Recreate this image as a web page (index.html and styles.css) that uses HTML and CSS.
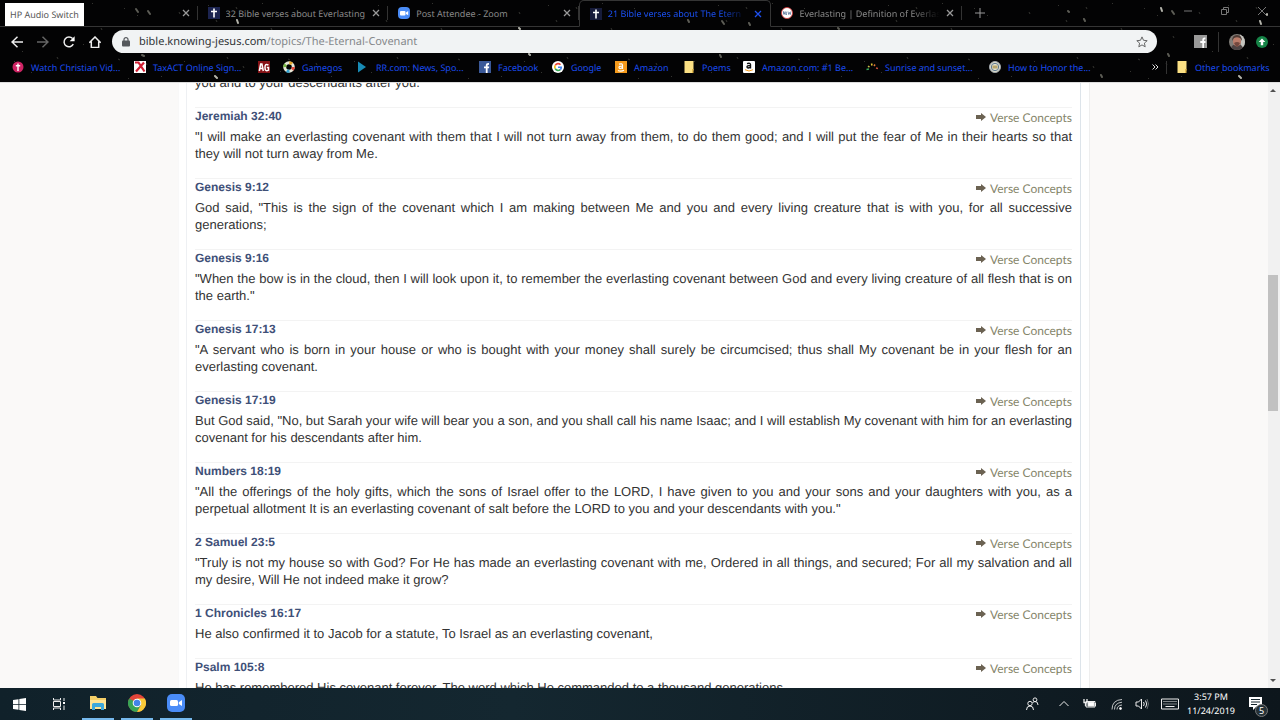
FILE: index.html
```html
<!DOCTYPE html>
<html lang="en">
<head>
<meta charset="utf-8">
<title>21 Bible verses about The Eternal Covenant</title>
<link rel="stylesheet" href="styles.css">
</head>
<body>
<header class="chrome">
  <svg class="stars" viewBox="0 0 1280 82" preserveAspectRatio="xMidYMid slice" aria-hidden="true">
    <defs>
      <pattern id="dust" width="170" height="82" patternUnits="userSpaceOnUse">
        <path class="dust" d="M9 12l1 2M31 72l1 1M46 20l1 2M66 7l1 2M83 44l1 1M101 28l1 2M118 59l2 1M137 15l1 1M153 36l1 2M161 76l1 1M22 51l1 1M73 66l1 2M128 78l1 1M92 3l1 1M14 61l1 1M57 57l1 2M110 71l1 1M146 63l1 2M38 5l1 1M124 8l1 1"/>
      </pattern>
    </defs>
    <rect width="1280" height="82" fill="url(#dust)"/>
    <g class="streaks">
      <path d="M136 9l2 3M148 11l2 3M722 21l2 3M749 23l1 2M1068 11l1 1M1084 19l1 2M1172 11l2 3M1168 54l1 2M1101 75l1 2M838 28l1 1M720 55l1 2M260 33l2 2M142 55l2 1M688 20l1 2"/>
      <path class="bright" d="M237 20l1 3M215 76l2 2M519 28l1 1M529 54l1 1M1161 8l1 3M1260 21l1 3M1239 76l2 2M1267 14v1"/>
    </g>
  </svg>
  <div class="tooltip" role="tooltip">HP Audio Switch</div>

  <div class="tabstrip">
    <div class="tabs" role="tablist">
      <div class="tab" role="tab"><span class="tab-title"></span><button class="close" aria-label="Close tab"><svg viewBox="0 0 8 8"><path d="M1 1l6 6M7 1l-6 6"/></svg></button></div>
      <div class="tab" role="tab"><svg class="icon" viewBox="0 0 12 12"><rect width="12" height="12" fill="#1c2450"/><path d="M6 1.500v9M3 4.500h6" stroke="#fff" stroke-width="1.600"/></svg><span class="tab-title">32 Bible verses about Everlasting</span><button class="close" aria-label="Close tab"><svg viewBox="0 0 8 8"><path d="M1 1l6 6M7 1l-6 6"/></svg></button></div>
      <div class="tab" role="tab"><svg class="icon" viewBox="0 0 12 12"><rect width="12" height="12" rx="4" fill="#4a8cf7"/><rect x="2" y="4" width="5.500" height="4.500" rx="1" fill="#fff"/><path d="M8 5.500l2.200-1.400v4.200L8 7z" fill="#fff"/></svg><span class="tab-title">Post Attendee - Zoom</span><button class="close" aria-label="Close tab"><svg viewBox="0 0 8 8"><path d="M1 1l6 6M7 1l-6 6"/></svg></button></div>
      <div class="tab active" role="tab" aria-selected="true"><svg class="icon" viewBox="0 0 12 12"><rect width="12" height="12" fill="#161b3a"/><path d="M6 1.500v9M3 4.500h6" stroke="#fff" stroke-width="1.600"/></svg><span class="tab-title fade">21 Bible verses about The Etern</span><button class="close" aria-label="Close tab"><svg viewBox="0 0 8 8"><path d="M1 1l6 6M7 1l-6 6"/></svg></button></div>
      <div class="tab" role="tab"><svg class="icon" viewBox="0 0 12 12"><circle cx="6" cy="6" r="5.500" fill="#fff" stroke="#d33" stroke-width=".8"/><path d="M2.500 7.500v-3l1.500 3v-3M5 4.500v3h1M5 6h1M7 4.500l.7 3 .8-2 .8 2 .5-3" fill="none" stroke="#47658c" stroke-width=".7"/></svg><span class="tab-title fade">Everlasting | Definition of Everlas</span><button class="close" aria-label="Close tab"><svg viewBox="0 0 8 8"><path d="M1 1l6 6M7 1l-6 6"/></svg></button></div>
    </div>
    <button class="new-tab" aria-label="New tab"><svg viewBox="0 0 10 10"><path d="M5 0v10M0 5h10"/></svg></button>
    <div class="window-buttons">
      <button aria-label="Minimize"><svg viewBox="0 0 8 8"><path d="M0 4h8"/></svg></button>
      <button aria-label="Restore"><svg viewBox="0 0 8 8"><path d="M.5 2.500h5v5h-5zM2.500 2.500v-2h5v5h-2"/></svg></button>
      <button aria-label="Close"><svg viewBox="0 0 8 8"><path d="M0 0l8 8M8 0l-8 8"/></svg></button>
    </div>
  </div>

  <div class="toolbar">
    <button aria-label="Back"><svg viewBox="0 0 12 12"><path d="M12 6H1M6.500.8L1 6l5.500 5.200"/></svg></button>
    <button aria-label="Forward" class="dim"><svg viewBox="0 0 12 12"><path d="M0 6h11M5.500.8L11 6l-5.500 5.200"/></svg></button>
    <button aria-label="Reload"><svg viewBox="0 0 12 12"><path d="M10.300 8.200A4.900 4.900 0 1 1 9.600 2.600"/><path d="M11.600.3v5H6.600z" fill="#fff" stroke="none"/></svg></button>
    <button aria-label="Home"><svg viewBox="0 0 12 12"><path d="M.3 6.800L6 1l5.700 5.800M2.300 5.500v6h7.400v-6"/></svg></button>
    <div class="omnibox">
      <svg class="lock" viewBox="0 0 8 10"><rect y="3.500" width="8" height="6" rx="1" fill="#55585c"/><path d="M2 4V2.600a2 2 0 0 1 4 0V4" fill="none" stroke="#55585c" stroke-width="1.200"/></svg>
      <div class="url"><span class="host">bible.knowing-jesus.com</span>/topics/The-Eternal-Covenant</div>
      <button class="star" aria-label="Bookmark this page"><svg viewBox="0 0 12 12"><path d="M6 .9l1.500 3.400 3.700.4-2.800 2.400.8 3.700L6 8.900l-3.200 1.900.8-3.700L.8 4.700l3.700-.4z"/></svg></button>
    </div>
    <button class="ext" aria-label="Facebook extension"><svg viewBox="0 0 13 13"><rect width="13" height="13" fill="#999"/><path d="M8.300 13V8h-2V6h2V4.500Q8.300 2.200 11.400 2.600v1.600Q10 4 10 5v1h1.500v2H10v5" fill="#fff"/></svg></button>
    <span class="divider"></span>
    <button class="avatar" aria-label="Profile"><svg viewBox="0 0 16 16"><defs><clipPath id="face"><circle cx="8" cy="8" r="8"/></clipPath></defs><g clip-path="url(#face)"><path d="M0 0h16v16H0z" fill="#807d78"/><path d="M11 0h5v13h-4z" fill="#c5c5c0"/><path d="M0 16l4-5h8l4 5z" fill="#4e4444"/><ellipse cx="8" cy="7.500" rx="4" ry="5" fill="#bb7c69"/><path d="M3 7q0-6 5-6t5 6l-2-3q-3-1.500-6 0z" fill="#4f3b35"/><path d="M5 9q3-2 6 0l-2 3.500H7z" fill="#74483e"/></g></svg></button>
    <button class="update" aria-label="Update available"><svg viewBox="0 0 12 12"><circle cx="6" cy="6" r="6" fill="#168447"/><path d="M6 2.500l3.300 3.500H7.200v3.200H4.800V6H2.700z" fill="#fff"/></svg></button>
  </div>

  <nav class="bookmarks" aria-label="Bookmarks">
    <a href="#"><svg class="icon" viewBox="0 0 12 12"><circle cx="6" cy="6" r="5.500" fill="#cf2464"/><path d="M6 2.500v7.500M3.800 4.800h4.400" stroke="#fff" stroke-width="1.400"/></svg>Watch Christian Vid...</a>
    <a href="#"><svg class="icon" viewBox="0 0 12 12"><rect width="12" height="12" fill="#fff"/><path d="M1 1.500h3.500l6 9M2 10.500l8-9" fill="none" stroke="#d21f34" stroke-width="2.200"/></svg>TaxACT Online Sign...</a>
    <a href="#" aria-label="AG"><svg class="icon" viewBox="0 0 12 12"><rect width="12" height="12" fill="#861216"/><path d="M1.300 10L2.700 3h1.200l1.400 7M2 7.500h2.500M10.500 4.200Q7 1.800 7 6.500t3.500 2.700V6.500H8.800" fill="none" stroke="#fff" stroke-width="1.500"/></svg></a>
    <a href="#"><svg class="icon" viewBox="0 0 12 12"><g fill="none" stroke-width="3"><circle cx="6" cy="6" r="4.300" stroke="#e8e8d8"/><circle cx="6" cy="6" r="4.300" stroke="#e84c3d" stroke-dasharray="3 24"/><circle cx="6" cy="6" r="4.300" stroke="#36a3cf" stroke-dasharray="3 24" stroke-dashoffset="-6"/><circle cx="6" cy="6" r="4.300" stroke="#77b843" stroke-dasharray="3 24" stroke-dashoffset="-13"/><circle cx="6" cy="6" r="4.300" stroke="#e6a92e" stroke-dasharray="3 24" stroke-dashoffset="-20"/></g></svg>Gamegos</a>
    <a href="#"><svg class="icon" viewBox="0 0 12 12"><path d="M1 .5L9 6l-8 5.500z" fill="#188bb5"/></svg>RR.com: News, Spo...</a>
    <a href="#"><svg class="icon" viewBox="0 0 12 12"><rect width="12" height="12" fill="#3b5998"/><path d="M6.800 12V7.300H5V5.400h1.800V4Q6.800 1.700 10 2v1.700Q8.600 3.600 8.600 4.500v.9h1.600l-.2 1.900H8.600V12" fill="#fff"/></svg>Facebook</a>
    <a href="#"><svg class="icon" viewBox="0 0 12 12"><circle cx="6" cy="6" r="6" fill="#fff"/><g fill="none" stroke-width="1.600"><path d="M3.200 4.300A3.300 3.300 0 0 1 8.500 3.700" stroke="#e94235"/><path d="M3.200 4.300a3.500 3.500 0 0 0 0 3.400" stroke="#fabb05"/><path d="M3.200 7.700a3.300 3.300 0 0 0 5.100.9" stroke="#34a853"/><path d="M8.300 8.600Q9.300 7.700 9.300 6.200H6" stroke="#4285f4"/></g></svg>Google</a>
    <a href="#"><svg class="icon" viewBox="0 0 12 12"><rect width="12" height="12" fill="#f69b1c"/><path d="M4 3.200q3.500-1 3.500 1v3.700M7.300 5q-3.500 0-3.300 1.600.5 2 3.300 0M3 9.500q3 1.300 6-.2" fill="none" stroke="#fff" stroke-width="1.200"/></svg>Amazon</a>
    <a href="#"><svg class="icon" viewBox="0 0 12 12"><path d="M1.500 0h9v9l-1.500 3H1.500z" fill="#fbe084"/><path d="M9 8h1.500v4H9z" fill="#e0b64a"/></svg>Poems</a>
    <a href="#"><svg class="icon" viewBox="0 0 12 12"><rect width="12" height="12" rx="1" fill="#fff"/><path d="M4 2.600q3.500-1 3.500 1v4M7.300 4.400Q3.800 4.500 4 6.100q.5 1.700 3.300 0" fill="none" stroke="#111" stroke-width="1.400"/><path d="M2 8.700q4 2.600 8 0" fill="none" stroke="#f69b1c"/></svg>Amazon.com: #1 Be...</a>
    <a href="#"><svg class="icon" viewBox="0 0 12 12"><g fill="none" stroke-width="1.500"><path d="M.5 8.500L3 8" stroke="#35a75a"/><path d="M2 5l1.500 1.200" stroke="#c8b947"/><path d="M5.500 2.500L6 4.500" stroke="#e3c534"/><path d="M9 3.500L8 5" stroke="#e57735"/><path d="M12 7.500l-2-.5" stroke="#c64b37"/></g></svg>Sunrise and sunset...</a>
    <a href="#"><svg class="icon" viewBox="0 0 12 12"><circle cx="6" cy="6" r="5.500" fill="#e1dfcd" stroke="#a3a9ad"/><circle cx="6" cy="6" r="3.700" fill="none" stroke="#5d7890"/><path d="M3.500 4.500h5v3h-5z" fill="#b9a66b"/></svg>How to Honor the...</a>
    <button class="more" aria-label="More bookmarks"><svg viewBox="0 0 7 6"><path d="M.5.500L3 3 .5 5.500M3.500.500L6 3 3.500 5.500"/></svg></button>
    <a href="#" class="other"><svg class="icon" viewBox="0 0 12 12"><path d="M1.500 0h9v9l-1.500 3H1.500z" fill="#fbe084"/><path d="M9 8h1.500v4H9z" fill="#e0b64a"/></svg>Other bookmarks</a>
  </nav>
</header>

<div class="viewport">
  <div class="page">
    <main class="content">
      <section class="verse"><p>you and to your descendants after you.</p></section>
      <section class="verse"><div class="verse-head"><h2><a href="#">Jeremiah 32:40</a></h2><a href="#" class="concepts"><svg viewBox="0 0 10 8"><path d="M0 2h5V0l5 4-5 4V6H0z"/></svg>Verse Concepts</a></div>
        <p>"I will make an everlasting covenant with them that I will not turn away from them, to do them good; and I will put the fear of Me in their hearts so that they will not turn away from Me.</p></section>
      <section class="verse"><div class="verse-head"><h2><a href="#">Genesis 9:12</a></h2><a href="#" class="concepts"><svg viewBox="0 0 10 8"><path d="M0 2h5V0l5 4-5 4V6H0z"/></svg>Verse Concepts</a></div>
        <p>God said, "This is the sign of the covenant which I am making between Me and you and every living creature that is with you, for all successive generations;</p></section>
      <section class="verse"><div class="verse-head"><h2><a href="#">Genesis 9:16</a></h2><a href="#" class="concepts"><svg viewBox="0 0 10 8"><path d="M0 2h5V0l5 4-5 4V6H0z"/></svg>Verse Concepts</a></div>
        <p>"When the bow is in the cloud, then I will look upon it, to remember the everlasting covenant between God and every living creature of all flesh that is on the earth."</p></section>
      <section class="verse"><div class="verse-head"><h2><a href="#">Genesis 17:13</a></h2><a href="#" class="concepts"><svg viewBox="0 0 10 8"><path d="M0 2h5V0l5 4-5 4V6H0z"/></svg>Verse Concepts</a></div>
        <p>"A servant who is born in your house or who is bought with your money shall surely be circumcised; thus shall My covenant be in your flesh for an everlasting covenant.</p></section>
      <section class="verse"><div class="verse-head"><h2><a href="#">Genesis 17:19</a></h2><a href="#" class="concepts"><svg viewBox="0 0 10 8"><path d="M0 2h5V0l5 4-5 4V6H0z"/></svg>Verse Concepts</a></div>
        <p>But God said, "No, but Sarah your wife will bear you a son, and you shall call his name Isaac; and I will establish My covenant with him for an everlasting covenant for his descendants after him.</p></section>
      <section class="verse"><div class="verse-head"><h2><a href="#">Numbers 18:19</a></h2><a href="#" class="concepts"><svg viewBox="0 0 10 8"><path d="M0 2h5V0l5 4-5 4V6H0z"/></svg>Verse Concepts</a></div>
        <p>"All the offerings of the holy gifts, which the sons of Israel offer to the LORD, I have given to you and your sons and your daughters with you, as a perpetual allotment It is an everlasting covenant of salt before the LORD to you and your descendants with you."</p></section>
      <section class="verse"><div class="verse-head"><h2><a href="#">2 Samuel 23:5</a></h2><a href="#" class="concepts"><svg viewBox="0 0 10 8"><path d="M0 2h5V0l5 4-5 4V6H0z"/></svg>Verse Concepts</a></div>
        <p>"Truly is not my house so with God? For He has made an everlasting covenant with me, Ordered in all things, and secured; For all my salvation and all my desire, Will He not indeed make it grow?</p></section>
      <section class="verse"><div class="verse-head"><h2><a href="#">1 Chronicles 16:17</a></h2><a href="#" class="concepts"><svg viewBox="0 0 10 8"><path d="M0 2h5V0l5 4-5 4V6H0z"/></svg>Verse Concepts</a></div>
        <p>He also confirmed it to Jacob for a statute, To Israel as an everlasting covenant,</p></section>
      <section class="verse"><div class="verse-head"><h2><a href="#">Psalm 105:8</a></h2><a href="#" class="concepts"><svg viewBox="0 0 10 8"><path d="M0 2h5V0l5 4-5 4V6H0z"/></svg>Verse Concepts</a></div>
        <p>He has remembered His covenant forever, The word which He commanded to a thousand generations,</p></section>
    </main>
  </div>
  <div class="scrollbar" aria-hidden="true">
    <svg class="arrow" viewBox="0 0 6 4"><path d="M0 4l3-3 3 3z"/></svg>
    <div class="track"><div class="thumb"></div></div>
    <svg class="arrow" viewBox="0 0 6 4"><path d="M0 0l3 3 3-3z"/></svg>
  </div>
</div>

<footer class="taskbar">
  <button aria-label="Start"><svg class="start" viewBox="0 0 13 13"><path d="M0 2l5.500-.8V6H0zM6.300 1L13 0v6H6.300zM0 6.800h5.500v4.900L0 11zM6.300 6.800H13V13l-6.700-1z" fill="#fff"/></svg></button>
  <button aria-label="Task view"><svg class="line" viewBox="0 0 14 14"><path d="M1.500 1v2h7V1M1.500 13v-2h7v2M1.500 4.500h7v5h-7zM12 1v3M12 8.500V13"/><path d="M11 5h2v2h-2z" fill="#fff" stroke="none"/></svg></button>
  <button class="running" aria-label="File Explorer"><svg class="big" viewBox="0 0 18 16"><path d="M1 1h6l1.500 2H17v11H1z" fill="#f4cf68"/><path d="M1 5h16v9H1z" fill="#ffe393"/><path d="M3 15V9.500q0-1.500 1.500-1.500h9q1.500 0 1.500 1.500V15h-3v-3H6v3z" fill="#3da8dc"/></svg></button>
  <button class="running" aria-label="Chrome"><svg class="big" viewBox="0 0 18 18"><circle cx="9" cy="9" r="9" fill="#e3453a"/><path d="M1.200 4.500A9 9 0 0 0 9 18l4-7z" fill="#37a455"/><path d="M9 18a9 9 0 0 0 7.800-13.500H9L13 11z" fill="#f9cb39"/><circle cx="9" cy="9" r="4.300" fill="#fff"/><circle cx="9" cy="9" r="3.300" fill="#4284e8"/></svg></button>
  <button class="running" aria-label="Zoom"><svg class="big" viewBox="0 0 18 18"><rect width="18" height="18" rx="5" fill="#4a8cf7"/><rect x="3" y="6" width="8" height="6" rx="1.500" fill="#fff"/><path d="M11.800 8.200L15 6v6l-3.200-2z" fill="#fff"/></svg></button>
  <div class="tray">
    <button aria-label="People"><svg class="line" viewBox="0 0 14 14"><circle cx="5" cy="6.500" r="2.200"/><path d="M1.500 13q0-4 3.500-4t3.500 4M7.500 6q1-1.500 2.500-1.500 3 0 3 3.500"/><circle cx="10" cy="2.800" r="1.900"/></svg></button>
    <button aria-label="Hidden icons"><svg class="line" viewBox="0 0 14 14"><path d="M2.500 9L7 4.500 11.500 9"/></svg></button>
    <button aria-label="Battery"><svg class="line" viewBox="0 0 14 14"><path d="M3 4.500h9v5.500H3zM12.500 6v3" /><path d="M5 5.500h6v3.500H5z" fill="#fff"/><path d="M1 2v3.500h3V2M2.500 6v3" stroke-width="1.300"/></svg></button>
    <button aria-label="Network"><svg class="line" viewBox="0 0 14 14"><path d="M3 12.500Q3 3 13 2.500M5.500 12.500Q5.500 6 13 5.200M8 12.500Q8 8.500 13 8" opacity=".8"/><circle cx="11.500" cy="11.500" r="1" fill="#fff"/></svg></button>
    <button aria-label="Volume"><svg class="line" viewBox="0 0 14 14"><path d="M1 5h2.500L6.500 2v10l-3-3H1zM8.500 5q1.500 2 0 4M10.500 3.500q2.500 3.500 0 7"/><path d="M12 2q3 5 0 10" opacity=".4"/></svg></button>
    <button aria-label="Keyboard" class="wide"><svg class="line keyboard" viewBox="0 0 18 12"><path d="M.5 1h17v10H.5z"/><path d="M2.500 3.500h13M2.500 6h13" stroke-dasharray="1 1"/><path d="M4.500 8.500h9"/></svg></button>
    <div class="clock"><time>3:57 PM</time><time>11/24/2019</time></div>
    <button aria-label="Notifications" class="notify"><svg viewBox="0 0 14 14"><path d="M0 0h13v10H7l-3 3v-3H0z" fill="#fff"/><path d="M2 2.500h9M2 5h9M2 7.500h6" stroke="#14242c"/></svg><span class="badge">5</span></button>
  </div>
</footer>
</body>
</html>
```

FILE: styles.css
```css
* { box-sizing: border-box; }

body {
  margin: 0;
  height: 100vh;
  display: flex;
  flex-direction: column;
  overflow: hidden;
  background: #faf9f8;
  font-family: "Noto Sans", sans-serif;
  font-size: 9px;
  text-rendering: geometricPrecision;
}

button {
  display: flex;
  align-items: center;
  justify-content: center;
  padding: 0;
  border: 0;
  background: none;
  color: inherit;
  font: inherit;
}

a { text-decoration: none; }
svg { display: block; flex: none; }
.icon { width: 12px; height: 12px; }

/* Browser frame */
.chrome {
  position: relative;
  flex: none;
  background: #030304;
}

.stars {
  position: absolute;
  inset: 0;
  width: 100%;
  height: 100%;
}
.dust { stroke: #33332f; }
.streaks { stroke: #5c5c55; stroke-width: 2; stroke-linecap: round; }
.bright { stroke: #b5b5ac; }

.tooltip {
  position: absolute;
  top: 3px;
  left: 5px;
  z-index: 2;
  padding: 0 5px;
  background: #fff;
  color: #555;
  line-height: 23px;
  white-space: nowrap;
}

.tabstrip {
  position: relative;
  display: flex;
  height: 27px;
  padding-left: 7px;
  border-bottom: 1px solid #353535;
}

.tabs { display: flex; flex: 0 1 955px; min-width: 0; }

.tab {
  display: flex;
  flex: 1 1 0;
  min-width: 0;
  align-items: center;
  gap: 6px;
  padding: 0 8px 0 10px;
  color: #8a8a8a;
  background: linear-gradient(#333, #333) right center / 1px 14px no-repeat;
}

.tab-title {
  flex: 1;
  overflow: hidden;
  white-space: nowrap;
}
.tab-title.fade {
  -webkit-mask-image: linear-gradient(90deg, #000 80%, transparent);
  mask-image: linear-gradient(90deg, #000 80%, transparent);
}

.tab.active {
  height: 27px;
  color: #1a4ff0;
  border: 1px solid #353535;
  border-bottom: 1px solid #030304;
  border-radius: 5px 5px 0 0;
  background: none;
}

.close svg { width: 8px; height: 8px; fill: none; stroke: #999; stroke-width: 1.300; }
.active .close svg { stroke: #1e50ef; }

.new-tab { width: 36px; }
.new-tab svg { width: 10px; height: 10px; stroke: #999; }

.window-buttons { display: flex; margin-left: auto; padding-bottom: 4px; }
.window-buttons button { width: 37px; }
.window-buttons svg { width: 8px; height: 8px; fill: none; stroke: #777; stroke-width: 1; }

.toolbar {
  position: relative;
  display: flex;
  align-items: center;
  height: 29px;
  padding: 0 10px 0 4px;
}
.toolbar > button { width: 26px; height: 24px; }
.toolbar > button svg { width: 12px; height: 12px; fill: none; stroke: #eee; stroke-width: 1.500; }
.toolbar > .dim svg { stroke: #666; }
.toolbar > .ext { margin-left: 30px; }
.toolbar > .ext svg { width: 13px; height: 13px; stroke: none; }
.toolbar > .avatar { width: 20px; margin-left: 8px; }
.toolbar > .avatar svg { width: 16px; height: 16px; stroke: none; }
.toolbar > .update { width: 12px; margin-left: 9px; margin-right: 2px; }
.toolbar > .update svg { stroke: none; }
.divider { width: 1px; height: 20px; margin-left: 5px; background: #333; }

.omnibox {
  flex: 1;
  display: flex;
  align-items: center;
  gap: 9px;
  height: 23px;
  margin-left: 4px;
  padding: 0 9px 0 10px;
  border-radius: 12px;
  background: #f1f3f4;
  color: #85888b;
}
.lock { width: 8px; height: 10px; }
.url { flex: 1; font-size: 11px; white-space: nowrap; }
.host { color: #303336; }
.star svg { width: 12px; height: 12px; fill: none; stroke: #666; }

.bookmarks {
  position: relative;
  display: grid;
  grid-template-columns: 122px 124px 25px 74px 122px 73px 63px 68px 60px 123px 123px 1fr 22px 114px;
  align-items: center;
  height: 26px;
  padding: 0 0 4px 12px;
}
.bookmarks a {
  display: flex;
  align-items: center;
  gap: 7px;
  color: #1a4cf0;
  white-space: nowrap;
}
.more svg { width: 7px; height: 6px; fill: none; stroke: #ddd; }
.bookmarks .other {
  padding-left: 9px;
  border-left: 1px solid #333;
}

/* Web page */
.viewport {
  flex: 1;
  min-height: 0;
  display: flex;
  overflow: hidden;
  border-top: 1px solid #ddd;
}

.page {
  flex: 1;
  min-width: 0;
  overflow: hidden;
}

.content {
  max-width: 912px;
  margin: 0 auto;
  padding: 0 9px 0 8px;
  border-right: 1px solid #eee;
  border-left: 1px solid #f8f8f8;
  background: linear-gradient(#eef0f3, #eef0f3) 7px 0 / 1px 100% no-repeat,
              linear-gradient(#dde4ea, #dde4ea) calc(100% - 8px) 0 / 1px 100% no-repeat, #fff;
  font-family: "Liberation Sans", Arial, sans-serif;
  font-size: 13px;
  line-height: 17px;
  color: #333;
}

.verse {
  margin: 0 8px;
  padding-bottom: 16px;
}
.verse:first-child { margin-top: -9px; }
.verse + .verse { border-top: 1px solid #f3f3f3; }

.verse p { margin: 0; text-align: justify; }

.verse-head {
  display: flex;
  justify-content: space-between;
  height: 20px;
}

.verse h2 { margin: 0; font-size: 12px; line-height: 17px; }
.verse h2 a { color: #3f5078; }

.concepts {
  display: flex;
  align-items: center;
  gap: 4px;
  color: #85856a;
  font-family: Lato, sans-serif;
  font-size: 12px;
  line-height: 20px;
}
.concepts svg { width: 10px; height: 8px; margin-bottom: 3px; fill: #6b6252; }

.scrollbar {
  flex: none;
  display: flex;
  flex-direction: column;
  align-items: center;
  width: 12px;
  padding: 5px 0;
  background: #f1f1f1;
}
.arrow { width: 6px; height: 4px; margin-right: 2px; fill: #505050; }
.track { flex: 1; width: 100%; padding-top: 183px; }
.thumb { width: 10px; height: 136px; background: #c1c1c1; }

/* Taskbar */
.taskbar {
  flex: none;
  display: flex;
  height: 32px;
  background: linear-gradient(90deg, #10212a, #142730 40%, #0d161c);
  color: #fff;
}
.taskbar > button { width: 39px; }
.taskbar > .running { border-bottom: 2px solid #76b9ed; width: 32px; margin-left: 7px; }
.taskbar > .running:nth-child(3) { margin-left: 4px; }
.start { width: 13px; height: 13px; }
.big { width: 18px; height: 18px; }
.line { width: 14px; height: 14px; fill: none; stroke: #eee; stroke-width: 1; }
.keyboard { width: 18px; height: 12px; }

.tray { display: flex; margin-left: auto; padding-right: 10px; }
.tray button { width: 26px; }
.tray button:first-child { margin-right: 6px; }
.tray .wide { width: 30px; }

.clock {
  display: flex;
  flex-direction: column;
  justify-content: center;
  align-items: center;
  width: 52px;
  line-height: 14px;
}

.tray .notify { position: relative; width: 28px; margin-left: 5px; }
.notify svg { width: 14px; height: 14px; }
.badge {
  position: absolute;
  right: 2px;
  bottom: 3px;
  width: 13px;
  height: 13px;
  border: 1px solid #777;
  border-radius: 50%;
  background: #263238;
  line-height: 11px;
  text-align: center;
}
```
